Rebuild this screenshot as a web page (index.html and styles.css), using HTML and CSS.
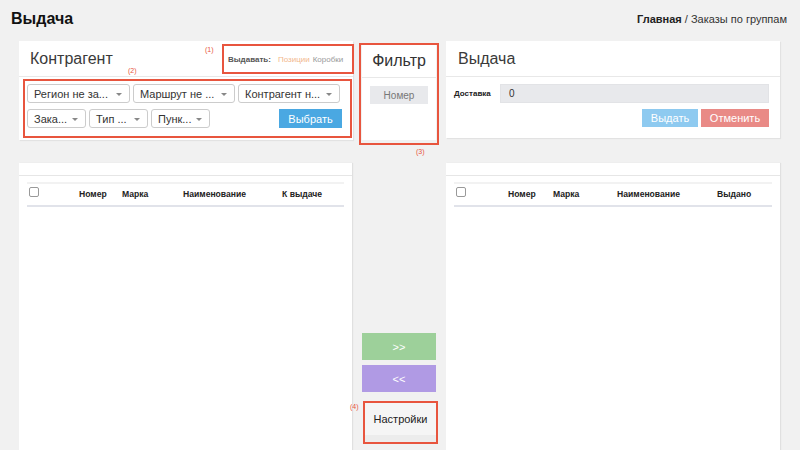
FILE: index.html
```html
<!DOCTYPE html>
<html lang="ru">
<head>
<meta charset="utf-8">
<link rel="stylesheet" href="styles.css">
</head>
<body>
<header class="topbar">
  <h1 class="page-title">Выдача</h1>
  <div class="crumbs"><b>Главная</b> / Заказы по группам</div>
</header>

<section class="row-top">
  <div class="panel">
    <div class="panel-head">
      <span class="panel-title">Контрагент</span>
      <span class="note n1">(1)</span>
      <div class="issue-mode mark">
        <b>Выдавать:</b> <span class="mode-on">Позиции</span> <span class="mode-off">Коробки</span>
      </div>
      <span class="note n2">(2)</span>
    </div>
    <div class="panel-body kbody">
      <div class="mark selects">
        <div class="sel-row">
          <div class="sel w103">Регион не за...<i class="caret"></i></div>
          <div class="sel w102">Маршрут не ...<i class="caret"></i></div>
          <div class="sel w102">Контрагент н...<i class="caret"></i></div>
        </div>
        <div class="sel-row">
          <div class="sel w59">Зака...<i class="caret"></i></div>
          <div class="sel w59">Тип ...<i class="caret"></i></div>
          <div class="sel w59">Пунк...<i class="caret"></i></div>
          <button class="btn btn-blue">Выбрать</button>
        </div>
      </div>
    </div>
  </div>

  <div class="filter-col">
    <div class="mark filter-wrap">
      <div class="filter-panel">
        <div class="filter-head">Фильтр</div>
        <div class="filter-body"><div class="num-input">Номер</div></div>
      </div>
    </div>
    <span class="note n3">(3)</span>
  </div>

  <div class="panel issue">
    <div class="panel-head"><span class="panel-title">Выдача</span></div>
    <div class="panel-body ibody">
      <div class="field">
        <label>Доставка</label>
        <div class="grey-input">0</div>
      </div>
      <div class="actions">
        <button class="btn btn-lblue">Выдать</button>
        <button class="btn btn-red">Отменить</button>
      </div>
    </div>
  </div>
</section>

<section class="row-bottom">
  <div class="panel tpanel">
    <div class="strip"></div>
    <div class="tbody">
      <div class="thead">
        <span class="cb"></span>
        <span class="c-num">Номер</span>
        <span class="c-mark">Марка</span>
        <span class="c-name">Наименование</span>
        <span class="c-qty">К выдаче</span>
      </div>
    </div>
  </div>

  <div class="mid-col">
    <button class="btn btn-green">&gt;&gt;</button>
    <button class="btn btn-purple">&lt;&lt;</button>
    <div class="mark settings-wrap"><button class="btn btn-settings">Настройки</button></div>
    <span class="note n4">(4)</span>
  </div>

  <div class="panel tpanel">
    <div class="strip"></div>
    <div class="tbody">
      <div class="thead right">
        <span class="cb"></span>
        <span class="c-num">Номер</span>
        <span class="c-mark">Марка</span>
        <span class="c-name">Наименование</span>
        <span class="c-qty">Выдано</span>
      </div>
    </div>
  </div>
</section>
</body>
</html>
```

FILE: styles.css
```css
* { box-sizing: border-box; }
html, body { margin: 0; }
body {
  background: #f1f1f1;
  font-family: "Liberation Sans", Arial, sans-serif;
  color: #333;
  width: 800px;
  height: 450px;
  overflow: hidden;
}
.topbar {
  display: flex;
  justify-content: space-between;
  align-items: center;
  height: 41px;
  padding: 0 13px 4px 11px;
}
.page-title {
  margin: 0;
  font-size: 16px;
  font-weight: bold;
  color: #111;
}
.crumbs { font-size: 11px; color: #333; }
.crumbs b { font-weight: bold; color: #222; }

.row-top {
  display: grid;
  grid-template-columns: 334px 93px 334px;
  padding-left: 19px;
  align-items: start;
}
.panel {
  background: #fff;
  box-shadow: 1px 1px 1px rgba(0,0,0,0.06);
  position: relative;
}
.panel-head {
  height: 36px;
  border-bottom: 1px solid #e8e8e8;
  display: flex;
  align-items: center;
  justify-content: space-between;
  position: relative;
  padding-left: 11px;
}
.panel-title {
  font-size: 16px;
  color: #3a3a3a;
}
.mark { border: 2px solid #e8553e; }
.note {
  position: absolute;
  font-size: 7px;
  color: #e8553e;
}
.n1 { left: 186px; top: 5px; }
.n2 { left: 109px; top: 26px; }
.n3 { left: 63px; top: 107px; }
.n4 { left: -2px; top: 240px; }
.issue-mode {
  width: 132px;
  height: 30px;
  margin-right: -1px;
  margin-top: 3px;
  align-self: flex-start;
  display: flex;
  align-items: center;
  padding-left: 4px;
  font-size: 8px;
  gap: 3px;
}
.issue-mode b { color: #555; margin-right: 4px; }
.mode-on { color: #f2b88c; }
.mode-off { color: #999; }

.kbody { padding: 2px 1px 2px 4px; }
.selects {
  height: 59px;
  padding: 3px 0 0 2px;
  display: flex;
  flex-direction: column;
  gap: 6px;
}
.sel-row { display: flex; gap: 3px; align-items: center; }
.sel {
  height: 19px;
  border: 1px solid #ccc;
  border-radius: 3px;
  background: #fff;
  font-size: 11px;
  color: #333;
  display: flex;
  align-items: center;
  padding-left: 6px;
  position: relative;
  white-space: nowrap;
}
.w103 { width: 103px; }
.w102 { width: 102px; }
.w59 { width: 59px; }
.caret {
  position: absolute;
  right: 7px;
  top: 8px;
  border-left: 3px solid transparent;
  border-right: 3px solid transparent;
  border-top: 3px solid #888;
}
.btn {
  border: none;
  font-family: inherit;
  font-size: 11px;
  color: #fff;
  padding: 0;
  cursor: pointer;
}
.btn-blue {
  margin-left: auto;
  margin-right: 8px;
  width: 63px;
  height: 19px;
  background: #4aa8e2;
}

.filter-col { position: relative; padding: 2px 0 0 6px; }
.filter-wrap { width: 80px; height: 102px; padding: 0 1px 3px 1px; }
.filter-panel { background: #fff; height: 100%; }
.filter-head {
  height: 33px;
  border-bottom: 1px solid #e8e8e8;
  text-align: center;
  font-size: 16px;
  line-height: 31px;
  color: #333;
}
.filter-body { padding: 8px 0 0 8px; }
.num-input {
  width: 58px;
  height: 18px;
  background: #e8e9ec;
  font-size: 10px;
  color: #777;
  display: flex;
  align-items: center;
  justify-content: center;
}

.issue .panel-head { padding-left: 12px; }
.ibody { padding: 7px 11px 11px 8px; }
.field { display: flex; align-items: center; gap: 9px; }
.field label { font-size: 8px; font-weight: bold; color: #222; width: 37px; }
.grey-input {
  flex: 1;
  height: 19px;
  background: #e8e9ec;
  border: 1px solid #e2e3e6;
  font-size: 10px;
  color: #333;
  padding-left: 8px;
  display: flex;
  align-items: center;
}
.actions { display: flex; justify-content: flex-end; gap: 3px; margin-top: 6px; }
.btn-lblue { width: 56px; height: 18px; background: #8ecaf0; }
.btn-red { width: 68px; height: 18px; background: #e98a86; }

.row-bottom {
  display: grid;
  grid-template-columns: 333px 94px 334px;
  padding-left: 19px;
  margin-top: 18px;
  height: 300px;
}
.tpanel { box-shadow: 1px 0 1px rgba(0,0,0,0.07); }
.strip { height: 13px; border-bottom: 1px solid #e6e6e6; }
.tbody { padding: 6px 8px 0 8px; }
.thead {
  height: 25px;
  border-top: 2px solid #f2f2f2;
  border-bottom: 2px solid #e1e3ea;
  display: flex;
  align-items: center;
  font-size: 8.6px;
  font-weight: bold;
  color: #222;
  position: relative;
}
.thead span { position: absolute; top: 5px; }
.cb {
  left: 2px;
  width: 10px;
  height: 10px;
  border: 1px solid #999;
  border-radius: 2px;
  top: 3px !important;
}
.c-num { left: 52px; }
.c-mark { left: 95px; }
.c-name { left: 156px; }
.c-qty { left: 255px; }
.right .c-num { left: 54px; }
.right .c-mark { left: 99px; }
.right .c-name { left: 163px; }
.right .c-qty { left: 263px; }

.mid-col {
  position: relative;
  display: flex;
  flex-direction: column;
  align-items: flex-start;
  padding: 170px 0 0 10px;
}
.btn-green, .btn-purple { width: 74px; height: 27px; }
.btn-green { background: #9dd09a; }
.btn-purple { background: #b09ae4; margin-top: 5px; }
.settings-wrap {
  margin-top: 9px;
  margin-left: 1px;
  width: 75px;
  height: 43px;
  background: #f4f4f4;
  padding: 0;
}
.btn-settings {
  width: 100%;
  height: 100%;
  padding-bottom: 8px;
  background: linear-gradient(#f5f5f5 0, #f5f5f5 82%, #ececec 82%);
  color: #222;
  font-size: 11px;
}
```
